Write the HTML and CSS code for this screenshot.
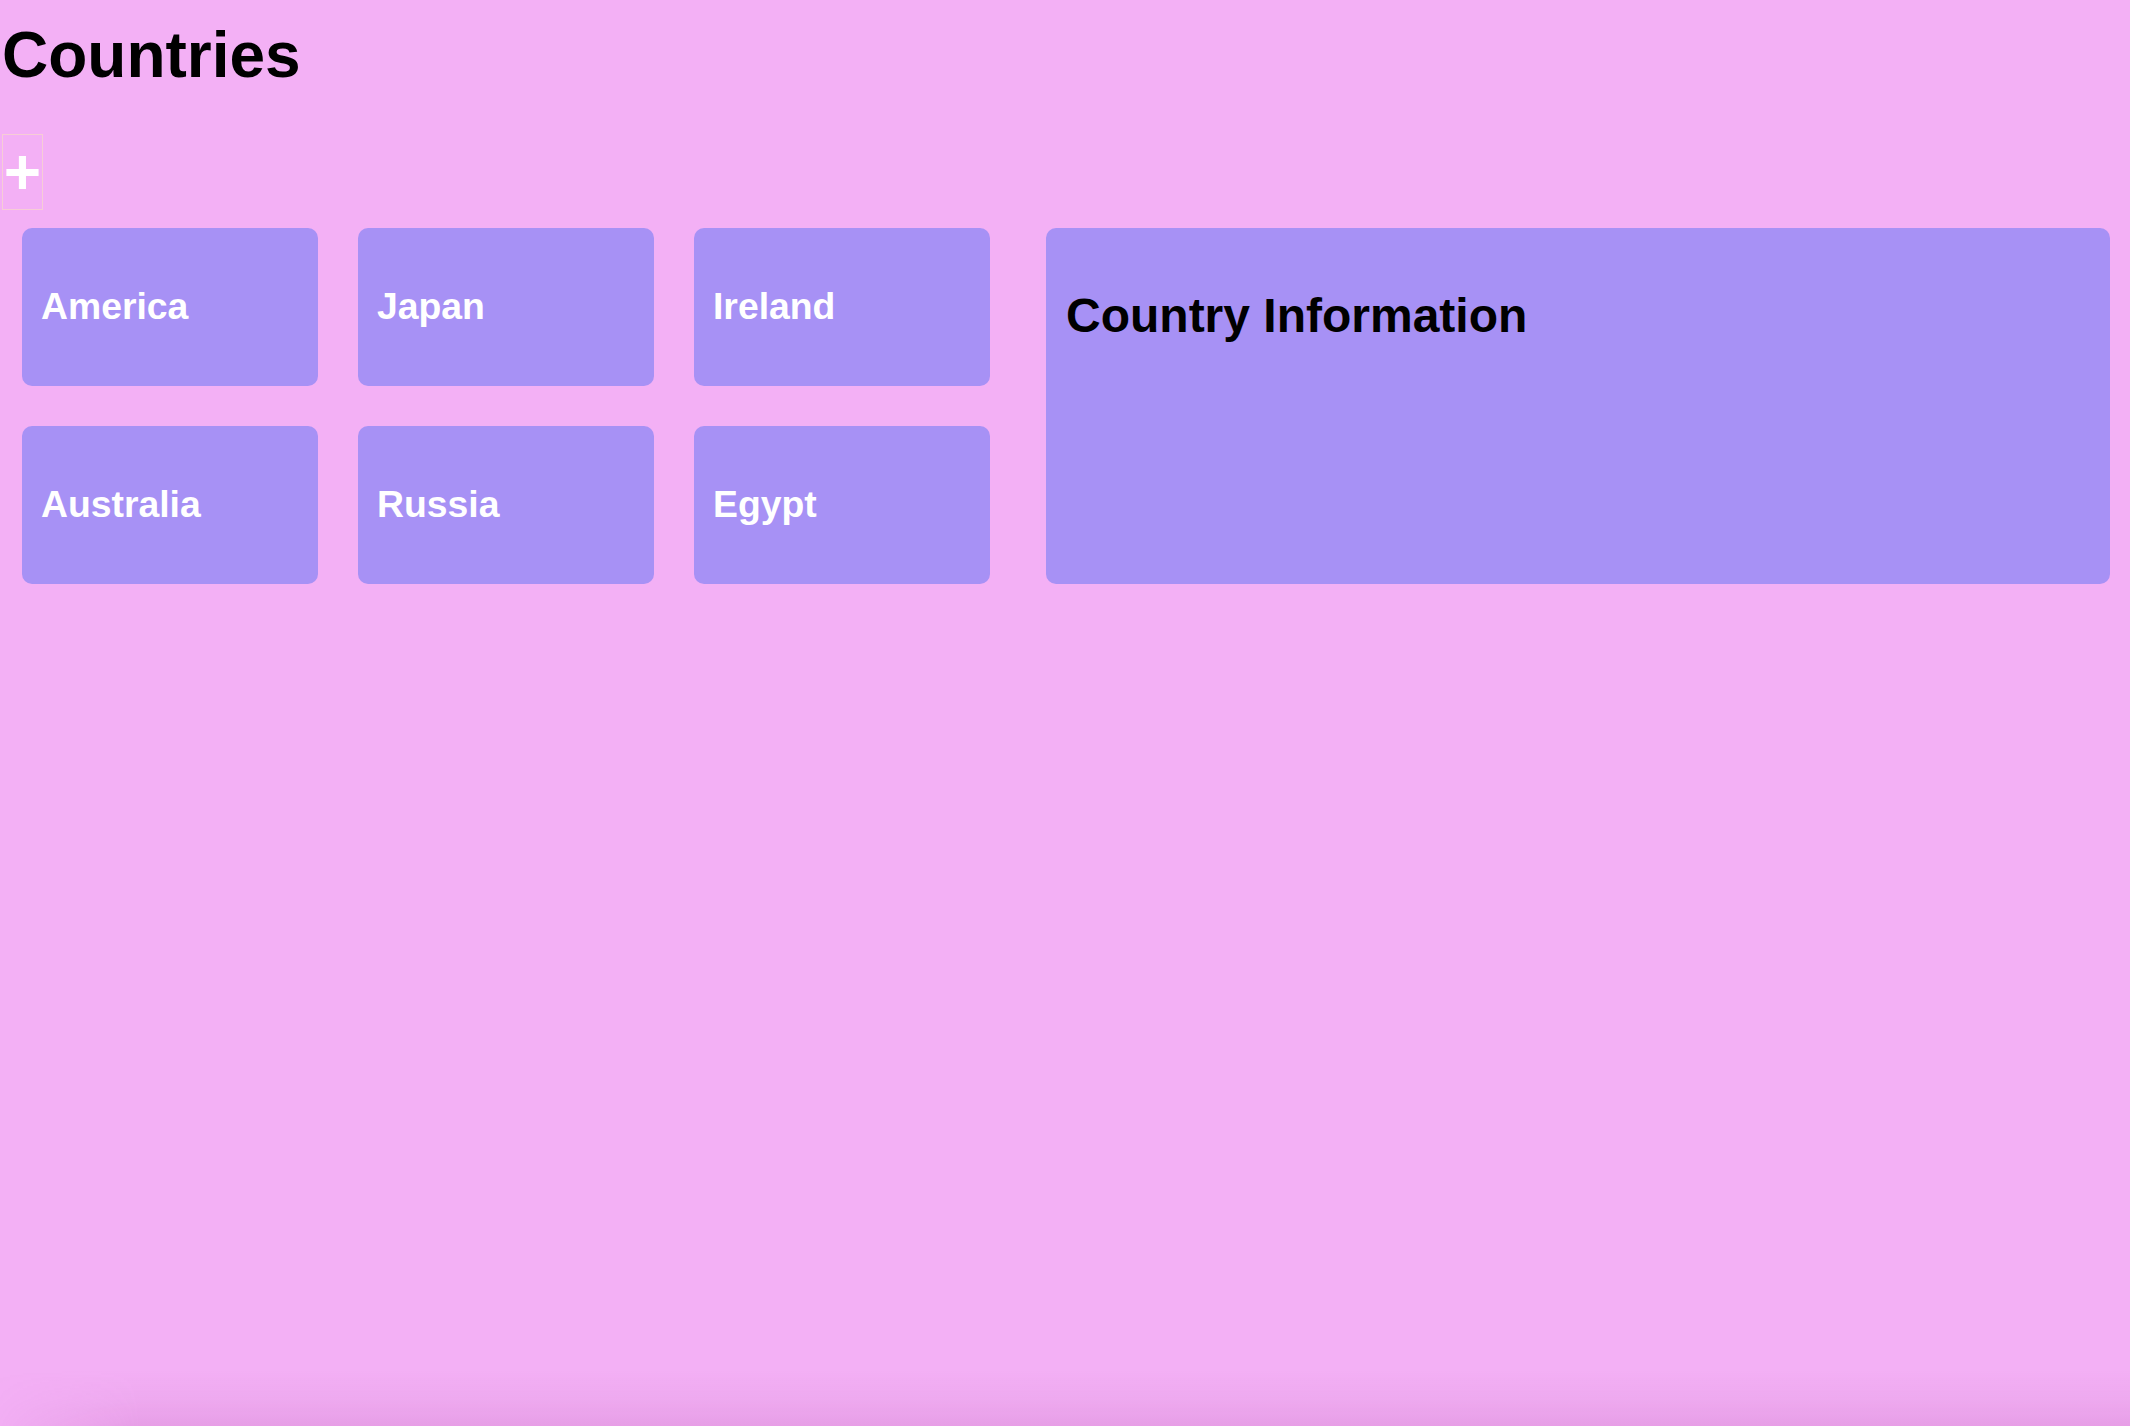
FILE: index.html
```html
<!DOCTYPE html>
<html lang="en">
<head>
<meta charset="utf-8">
<title>Countries</title>
<link rel="stylesheet" href="styles.css">
</head>
<body>
<div class="page">
  <h1 class="title">Countries</h1>
  <button class="add" type="button">+</button>
  <div class="main">
    <div class="grid">
      <div class="card"><h3 class="card-name">America</h3></div>
      <div class="card"><h3 class="card-name">Japan</h3></div>
      <div class="card"><h3 class="card-name">Ireland</h3></div>
      <div class="card"><h3 class="card-name">Australia</h3></div>
      <div class="card"><h3 class="card-name">Russia</h3></div>
      <div class="card"><h3 class="card-name">Egypt</h3></div>
    </div>
    <div class="info">
      <h2 class="info-title">Country Information</h2>
    </div>
  </div>
</div>
<div class="bottom-shade"></div>
</body>
</html>
```
FILE: styles.css
```css
html, body {
  margin: 0;
  padding: 0;
  height: 100%;
}
body {
  background: #f3b0f5;
  font-family: "Liberation Sans", Arial, sans-serif;
  color: #000;
}
.page {
  padding: 18px 0 0 2px;
}
.title {
  margin: 0 0 42px 0;
  font-size: 64px;
  line-height: 74px;
  font-weight: bold;
}
.add {
  display: block;
  width: 41px;
  height: 76px;
  padding: 0;
  margin: 0;
  border: 1px solid #f6cdd6;
  background: transparent;
  color: #fff;
  font-family: "Liberation Sans", Arial, sans-serif;
  font-size: 64px;
  font-weight: bold;
  line-height: 68px;
  text-align: center;
}
.main {
  display: flex;
  align-items: stretch;
  gap: 56px;
  margin-top: 18px;
  padding: 0 20px 0 20px;
}
.grid {
  display: grid;
  grid-template-columns: repeat(3, 296px);
  grid-auto-rows: 158px;
  column-gap: 40px;
  row-gap: 40px;
}
.card {
  background: #a791f5;
  border-radius: 10px;
  display: flex;
  align-items: center;
  padding: 0 0 1px 19px;
}
.card-name {
  margin: 0;
  color: #fff;
  font-size: 37.33px;
  font-weight: bold;
}
.info {
  flex: 1;
  background: #a791f5;
  border-radius: 10px;
  padding: 0 20px 20px 20px;
}
.info-title {
  margin: 60px 0 0 0;
  font-size: 48px;
  font-weight: bold;
}
.bottom-shade {
  position: fixed;
  left: 0;
  right: 0;
  bottom: 0;
  height: 56px;
  background: linear-gradient(to bottom, rgba(170, 70, 160, 0) 0%, rgba(170, 70, 160, 0.06) 50%, rgba(170, 70, 160, 0.16) 100%);
  -webkit-mask-image: linear-gradient(to right, rgba(0,0,0,0.1) 0, #000 140px);
  mask-image: linear-gradient(to right, rgba(0,0,0,0.1) 0, #000 140px);
  pointer-events: none;
}
```
